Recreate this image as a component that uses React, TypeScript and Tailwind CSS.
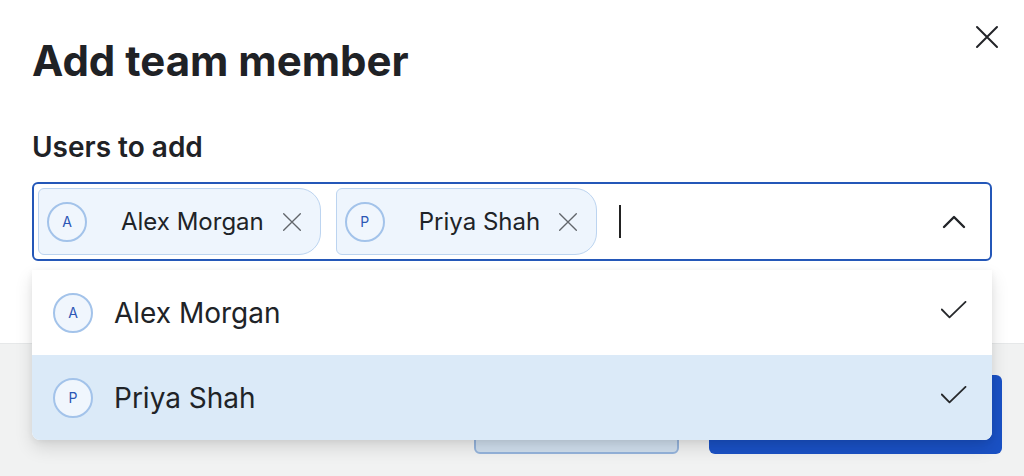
import React from "react";

const font = { fontFamily: "Inter, 'Noto Sans', sans-serif" };

function Avatar({ letter }: { letter: string }) {
  return (
    <div className="w-10 h-10 shrink-0 rounded-full border-2 border-[#a3c3ea] bg-[#f0f6fd] flex items-center justify-center text-[14px] text-[#2b57b5]">
      {letter}
    </div>
  );
}

function XIcon({ size, color, width }: { size: number; color: string; width: number }) {
  return (
    <svg width={size} height={size} viewBox="0 0 24 24" fill="none">
      <path d="M2 2L22 22M22 2L2 22" stroke={color} strokeWidth={width} strokeLinecap="round" />
    </svg>
  );
}

function Check() {
  return (
    <svg width={26} height={24} viewBox="0 0 26 24" fill="none">
      <path d="M0.8 8.5L8.5 16.3L24.5 0.9" stroke="#26282b" strokeWidth={1.8} strokeLinecap="round" strokeLinejoin="round" />
    </svg>
  );
}

function Chip({ letter, name }: { letter: string; name: string }) {
  return (
    <div className="h-[67px] flex items-center pl-[8px] pr-[18px] bg-[#eef5fd] border border-[#bcd4f0] rounded-l-[6px] rounded-r-[22px]">
      <Avatar letter={letter} />
      <span className="ml-[34px] text-[24px] text-[#202327]">{name}</span>
      <span className="ml-[18px] flex">
        <XIcon size={20} color="#62666b" width={1.6} />
      </span>
    </div>
  );
}

function Row({ letter, name, active }: { letter: string; name: string; active?: boolean }) {
  return (
    <div
      className={
        "h-[85px] flex items-center pl-[21px] pr-[25px] " +
        (active ? "bg-[#dbeaf8] rounded-b-[8px]" : "bg-white")
      }
    >
      <Avatar letter={letter} />
      <span className="ml-[21px] text-[28px] text-[#202327] flex-1">{name}</span>
      <Check />
    </div>
  );
}

export default function App() {
  return (
    <div className="w-[1024px] h-[476px] bg-white flex flex-col overflow-hidden" style={font}>
      <div className="h-[343px] shrink-0 px-8 pt-[36px]">
        <div className="flex items-start justify-between">
          <h1 className="text-[42px] leading-[50px] font-bold text-[#1f2226]">Add team member</h1>
          <button className="-mt-[11px] -mr-[7px] flex">
            <XIcon size={24} color="#222428" width={2} />
          </button>
        </div>
        <div className="mt-[45px] text-[28px] leading-[32px] font-semibold text-[#1f2226]">Users to add</div>
        <div className="relative mt-[19px]">
          <div className="h-[79px] border-2 border-[#2457b8] rounded-[6px] p-[4px] flex items-center gap-[15px]">
            <Chip letter="A" name="Alex Morgan" />
            <Chip letter="P" name="Priya Shah" />
            <span className="ml-[7px] w-[2px] h-[33px] bg-[#222]" />
            <span className="flex-1" />
            <span className="mr-[20px] flex">
              <svg width={24} height={14} viewBox="0 0 24 14" fill="none">
                <path d="M2 12L12 2L22 12" stroke="#222428" strokeWidth={2.4} strokeLinecap="round" strokeLinejoin="round" />
              </svg>
            </span>
          </div>
          <div className="absolute left-0 right-0 top-[88px] z-10 rounded-b-[8px] bg-white shadow-[0_8px_18px_rgba(0,0,0,0.12),0_2px_6px_rgba(0,0,0,0.06)]">
            <Row letter="A" name="Alex Morgan" />
            <Row letter="P" name="Priya Shah" active />
          </div>
        </div>
      </div>
      <div className="flex-1 bg-[#f1f2f2] border-t border-[#e6e8e9] flex justify-end items-start pt-[31px] pr-[22px] gap-[30px]">
        <button className="w-[205px] h-[79px] rounded-[6px] bg-[#d0dfee] border-2 border-[#95b4dc] text-[22px] text-[#1a51c5]">
          Cancel
        </button>
        <button className="w-[293px] h-[79px] rounded-[6px] bg-[#1a51c5] text-[22px] font-semibold text-white">
          Add members
        </button>
      </div>
    </div>
  );
}
